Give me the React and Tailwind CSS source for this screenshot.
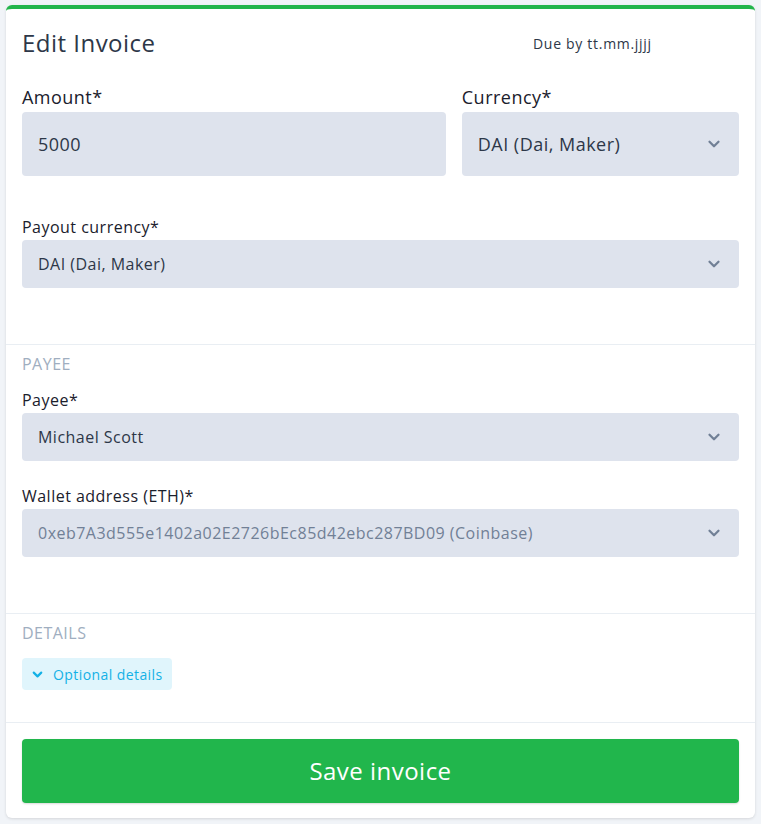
import React from "react";
import { ChevronDown } from "lucide-react";

const font = { fontFamily: '"Open Sans", "Liberation Sans", sans-serif' };

const Chevron = () => (
  <ChevronDown size={18} strokeWidth={3} className="text-[#718096] shrink-0" />
);

const Select = ({ value, muted, tall }) => (
  <div
    className={`flex items-center justify-between rounded-[4px] bg-[#dee3ed] pl-4 pr-4 ${
      tall ? "h-16 text-[18px]" : "h-12 text-[16px]"
    } ${muted ? "text-[#718096]" : "text-[#2d3748]"}`}
  >
    <span className="truncate">{value}</span>
    <Chevron />
  </div>
);

const Label = ({ children, big }) => (
  <div className={`${big ? "text-[18px] mb-[3px]" : "text-[16px] mb-px"} leading-6 text-[#1a202c]`}>
    {children}
  </div>
);

const SectionTitle = ({ children }) => (
  <div className="text-[16px] leading-6 uppercase text-[#a0aec0]">{children}</div>
);

export default function App() {
  return (
    <div className="min-h-screen bg-[#f1f4f8] pt-[5px] pb-2 px-[6px] tracking-[0.03em]" style={font}>
      <div className="bg-white rounded-md border-t-4 border-[#22b54b] shadow-[0_1px_3px_rgba(0,0,0,0.12)]">
        {/* Header + amounts */}
        <div className="px-4 pt-[18px] pb-14">
          <div className="grid grid-cols-5 gap-4 items-center h-8">
            <h1 className="col-span-3 text-[24px] leading-8 text-[#2d3748]">Edit Invoice</h1>
            <div className="col-span-2 text-center text-[14px] tracking-[0.05em] text-[#2d3748] pr-4">
              Due by tt.mm.jjjj
            </div>
          </div>

          <div className="grid grid-cols-5 gap-4 mt-[26px]">
            <div className="col-span-3">
              <Label big>Amount*</Label>
              <div className="h-16 rounded-[4px] bg-[#dee3ed] px-4 flex items-center text-[18px] text-[#2d3748]">
                5000
              </div>
            </div>
            <div className="col-span-2">
              <Label big>Currency*</Label>
              <Select value="DAI (Dai, Maker)" tall />
            </div>
          </div>

          <div className="mt-[39px]">
            <Label>Payout currency*</Label>
            <Select value="DAI (Dai, Maker)" />
          </div>
        </div>

        {/* Payee */}
        <div className="border-t border-[#e9eef3] px-4 pt-[7px] pb-14">
          <SectionTitle>Payee</SectionTitle>
          <div className="mt-3">
            <Label>Payee*</Label>
            <Select value="Michael Scott" />
          </div>
          <div className="mt-[23px]">
            <Label>Wallet address (ETH)*</Label>
            <Select value="0xeb7A3d555e1402a02E2726bEc85d42ebc287BD09 (Coinbase)" muted />
          </div>
        </div>

        {/* Details */}
        <div className="border-t border-[#e9eef3] px-4 pt-[7px] pb-8">
          <SectionTitle>Details</SectionTitle>
          <button className="mt-[13px] h-8 inline-flex items-center gap-2 rounded-[4px] bg-[#e0f5fc] pl-2 pr-[9px] text-[14px] tracking-[0.03em] text-[#13b1e6]">
            <ChevronDown size={15} strokeWidth={3.5} />
            <span>Optional details</span>
          </button>
        </div>

        {/* Save */}
        <div className="border-t border-[#e9eef3] px-4 pt-4 pb-[15px]">
          <button className="w-full h-16 rounded-[4px] bg-[#21b64c] text-white text-[24px] shadow-[0_1px_2px_rgba(0,0,0,0.15)]">
            Save invoice
          </button>
        </div>
      </div>
    </div>
  );
}
